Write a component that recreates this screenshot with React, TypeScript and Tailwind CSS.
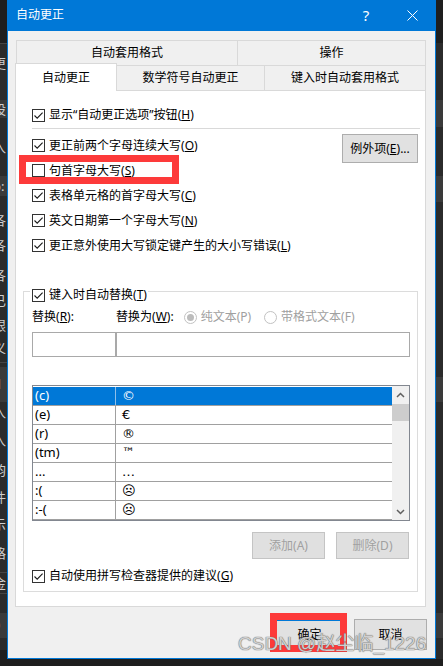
import React from 'react';

type Seg = { top: number; h: number; t?: string; bg?: string };

// background windows peeking out at the sides
const LEFT: Seg[] = [
  { top: 0, h: 43, bg: '#1e1e1e' },
  { top: 43, h: 1, bg: '#454545' },
  { top: 54, h: 18, t: '更' },
  { top: 100, h: 18, t: '设', bg: '#3a3a3a' },
  { top: 138, h: 18, t: '入' },
  { top: 176, h: 20, t: 'p:', bg: '#3a3a3a' },
  { top: 211, h: 18, t: '各' },
  { top: 236, h: 18, t: '各' },
  { top: 266, h: 18, t: '各' },
  { top: 291, h: 18, t: '已' },
  { top: 316, h: 18, t: '限' },
  { top: 339, h: 18, t: '义' },
  { top: 362, h: 1, bg: '#454545' },
  { top: 367, h: 35, t: 'd', bg: '#3a3a3a' },
  { top: 403, h: 18, t: '入' },
  { top: 431, h: 18, t: '入' },
  { top: 461, h: 18, t: '韵' },
  { top: 488, h: 18, t: '件' },
  { top: 515, h: 18, t: '示' },
  { top: 544, h: 18, t: '格' },
  { top: 572, h: 1, bg: '#454545' },
  { top: 574, h: 18, t: '金' },
  { top: 593, h: 1, bg: '#454545' },
  { top: 613, h: 25, t: '0', bg: '#3a3a3a' },
  { top: 650, h: 16, bg: '#1e1e1e' },
];

const RIGHT: Seg[] = [
  { top: 0, h: 43, bg: '#1e1e1e' },
  { top: 100, h: 27, bg: '#3a3a3a' },
  { top: 176, h: 26, bg: '#3a3a3a' },
  { top: 377, h: 25, bg: '#3a3a3a' },
  { top: 613, h: 25, bg: '#3a3a3a' },
  { top: 659, h: 7, bg: '#1e1e1e' },
];

function Strip({ segs, className }: { segs: Seg[]; className: string }) {
  let cur = 0;
  const out: React.ReactNode[] = [];
  segs.forEach((s, i) => {
    if (s.top > cur) out.push(<div key={'g' + i} style={{ height: s.top - cur }} />);
    out.push(
      <div
        key={i}
        style={{ height: s.h, background: s.bg }}
        className="flex items-center overflow-hidden whitespace-nowrap"
      >
        {s.t && <span className="-ml-[7px] text-[13px] leading-none text-[#cfcfcf]">{s.t}</span>}
      </div>
    );
    cur = s.top + s.h;
  });
  return <div className={className}>{out}</div>;
}

function Acc({ text, k, tail }: { text: string; k: string; tail?: string }) {
  return (
    <span className="whitespace-nowrap">
      {text}(<u>{k}</u>){tail}
    </span>
  );
}

function Check({ checked }: { checked: boolean }) {
  return (
    <span className="w-[13px] h-[13px] shrink-0 border border-[#333333] bg-white flex items-center justify-center">
      {checked && (
        <svg width="11" height="11" viewBox="0 0 11 11">
          <path d="M1.5 5.5 L4.2 8.2 L9.6 2.6" fill="none" stroke="#1a1a1a" strokeWidth="1.1" />
        </svg>
      )}
    </span>
  );
}

function CheckRow({ checked, text, k }: { checked: boolean; text: string; k: string }) {
  return (
    <div className="flex items-center gap-[4px]">
      <Check checked={checked} />
      <Acc text={text} k={k} />
    </div>
  );
}

function Radio({ on }: { on: boolean }) {
  return (
    <span className="w-[13px] h-[13px] shrink-0 rounded-full border border-[#c2c2c2] bg-white flex items-center justify-center">
      {on && <span className="w-[7px] h-[7px] rounded-full bg-[#bcbcbc]" />}
    </span>
  );
}

function Chevron({ up }: { up?: boolean }) {
  return (
    <svg width="9" height="6" viewBox="0 0 9 6">
      <path
        d={up ? 'M1 5 L4.5 1.5 L8 5' : 'M1 1 L4.5 4.5 L8 1'}
        fill="none"
        stroke="#606060"
        strokeWidth="1.5"
      />
    </svg>
  );
}

const ROWS = [
  ['(c)', '©'],
  ['(e)', '€'],
  ['(r)', '®'],
  ['(tm)', '™'],
  ['...', '…'],
  [':(', '☹'],
  [':-(', '☹'],
];

function ReplaceList() {
  return (
    <div className="mt-[28px] h-[136px] border border-[#828790] bg-white flex">
      <div className="flex-1 flex flex-col pt-px">
        {ROWS.map(([a, b], i) => (
          <div
            key={i}
            className={
              i === 0
                ? 'h-[19px] flex border-b border-[#a0a0a0] bg-[#0078d7] text-white'
                : 'h-[19px] flex border-b border-[#a0a0a0]'
            }
          >
            <div
              className={
                i === 0
                  ? 'w-[83px] pl-[2px] flex items-center border-r border-[#8fbfe9] text-[13px]'
                  : 'w-[83px] pl-[2px] flex items-center border-r border-[#a0a0a0] text-[13px]'
              }
            >
              {a}
            </div>
            <div className="flex-1 pl-[6px] flex items-center text-[13px] font-['DejaVu_Sans','Noto_Sans',sans-serif]">
              {b}
            </div>
          </div>
        ))}
      </div>
      <div className="w-[17px] bg-[#f0f0f0] flex flex-col">
        <div className="h-[18px] flex items-center justify-center">
          <Chevron up />
        </div>
        <div className="h-[17px] bg-[#cdcdcd]" />
        <div className="flex-1" />
        <div className="h-[17px] flex items-center justify-center">
          <Chevron />
        </div>
      </div>
    </div>
  );
}

function GroupBox() {
  return (
    <div className="mt-[33px] ml-[7px] w-[395px] border border-[#dcdcdc] pl-[8px] pr-[7px] pb-[5px] flex flex-col">
      <div className="-mt-[4px] h-[14px] self-start -ml-[2px] pl-[2px] pr-[1px] bg-white flex items-center">
        <CheckRow checked text="键入时自动替换" k="T" />
      </div>
      <div className="mt-[5px] h-[20px] flex items-center">
        <div className="w-[84px]">
          <Acc text="替换" k="R" tail=":" />
        </div>
        <Acc text="替换为" k="W" tail=":" />
        <div className="ml-[10px] flex items-center gap-[4px] text-[#a0a0a0]">
          <Radio on />
          <span>纯文本(P)</span>
        </div>
        <div className="ml-[13px] flex items-center gap-[4px] text-[#a0a0a0]">
          <Radio on={false} />
          <span>带格式文本(F)</span>
        </div>
      </div>
      <div className="mt-[5px] h-[25px] flex">
        <div className="w-[84px] border border-[#a9a9a9] bg-white" />
        <div className="flex-1 border border-[#a9a9a9] bg-white" />
      </div>
      <ReplaceList />
      <div className="mt-[11px] h-[27px] flex justify-end gap-[11px] pr-px">
        <div className="w-[73px] border border-[#c4c4c4] bg-[#e0e0e0] text-[#a0a0a0] flex items-center justify-center">
          添加(A)
        </div>
        <div className="w-[73px] border border-[#c4c4c4] bg-[#e0e0e0] text-[#a0a0a0] flex items-center justify-center">
          删除(D)
        </div>
      </div>
      <div className="mt-[7px] h-[20px] flex items-center">
        <CheckRow checked text="自动使用拼写检查器提供的建议" k="G" />
      </div>
    </div>
  );
}

function Tabs() {
  return (
    <div className="flex flex-col">
      <div className="ml-px h-[25px] flex">
        <div className="w-[222px] border border-b-0 border-[#d9d9d9] flex items-center justify-center">
          自动套用格式
        </div>
        <div className="w-[188px] border-t border-r border-[#d9d9d9] flex items-center justify-center">
          操作
        </div>
      </div>
      <div className="h-[25px] flex">
        <div className="relative z-10 -mt-[2px] w-[102px] h-[28px] bg-white border-x border-t border-[#d9d9d9] flex items-center justify-center pt-px">
          自动更正
        </div>
        <div className="w-[148px] border-t border-r border-[#d9d9d9] flex items-center justify-center">
          数学符号自动更正
        </div>
        <div className="w-[161px] border-t border-r border-[#d9d9d9] flex items-center justify-center">
          键入时自动套用格式
        </div>
      </div>
    </div>
  );
}

function Panel() {
  return (
    <div className="w-[411px] h-[517px] bg-white border border-[#d9d9d9] pt-[12px] flex flex-col">
      <div className="pl-[16px] h-[24px] flex items-center">
        <CheckRow checked text="显示“自动更正选项”按钮" k="H" />
      </div>
      <div className="ml-[16px] mr-[5px] mt-px h-px bg-[#d9d9d9]" />
      <div className="mt-[4px] flex pl-[16px] pr-[7px]">
        <div className="flex-1 flex flex-col">
          <div className="h-[25px] flex items-center">
            <CheckRow checked text="更正前两个字母连续大写" k="O" />
          </div>
          <div className="h-[25px] flex items-center">
            <CheckRow checked={false} text="句首字母大写" k="S" />
          </div>
          <div className="h-[25px] flex items-center">
            <CheckRow checked text="表格单元格的首字母大写" k="C" />
          </div>
          <div className="h-[25px] flex items-center">
            <CheckRow checked text="英文日期第一个字母大写" k="N" />
          </div>
          <div className="h-[25px] flex items-center">
            <CheckRow checked text="更正意外使用大写锁定键产生的大小写错误" k="L" />
          </div>
        </div>
        <div className="mt-px w-[76px] h-[29px] border border-[#adadad] bg-[#e1e1e1] flex items-center justify-center">
          <Acc text="例外项" k="E" tail="..." />
        </div>
      </div>
      <GroupBox />
    </div>
  );
}

function Dialog() {
  return (
    <div className="w-[429px] h-[659px] shrink-0 bg-[#f0f0f0] border-x border-b border-[#0078d7] flex flex-col">
      <div className="h-[31px] bg-[#0078d7] text-white flex items-center">
        <span className="pl-[8px] flex-1 -mt-px">自动更正</span>
        <div className="w-[46px] h-full flex items-center justify-center text-[15px]">?</div>
        <div className="w-[46px] h-full flex items-center justify-center">
          <svg width="11" height="11" viewBox="0 0 11 11">
            <path d="M0.5 0.5 L10.5 10.5 M10.5 0.5 L0.5 10.5" stroke="white" strokeWidth="1" />
          </svg>
        </div>
      </div>
      <div className="pt-[9px] pl-[7px]">
        <Tabs />
        <Panel />
      </div>
      <div className="mt-[12px] h-[31px] flex justify-end gap-[8px] pr-[8px]">
        <div className="w-[73px] border-2 border-[#0078d7] bg-[#e1e1e1] flex items-center justify-center">
          确定
        </div>
        <div className="w-[73px] border border-[#adadad] bg-[#e1e1e1] flex items-center justify-center">
          取消
        </div>
      </div>
    </div>
  );
}

export default function App() {
  return (
    <div className="relative w-[443px] h-[666px] overflow-hidden bg-[#1e1e1e] flex text-[12px] text-black font-['Noto_Sans','Noto_Sans_CJK_SC',sans-serif]">
      <Strip segs={LEFT} className="w-[7px] shrink-0 bg-[#2b2b2b] flex flex-col" />
      <Dialog />
      <Strip segs={RIGHT} className="flex-1 bg-[#2b2b2b] flex flex-col" />

      {/* annotation boxes */}
      <div className="absolute left-[19px] top-[155px] w-[160px] h-[29px] border-[7px] border-[#fd3a3a]" />
      <div className="absolute left-[270px] top-[613px] w-[77px] h-[39px] border-[7px] border-[#fd3a3a]" />

      {/* watermark */}
      <div className="absolute left-[238px] top-[634px] text-[19px] leading-none text-[#d0d0d0] whitespace-nowrap font-['Liberation_Sans','Noto_Sans_CJK_SC',sans-serif] [text-shadow:0_0_1px_#6a6a6a,0_0_1px_#6a6a6a]">
        CSDN @赵尘临_1226
      </div>
    </div>
  );
}
